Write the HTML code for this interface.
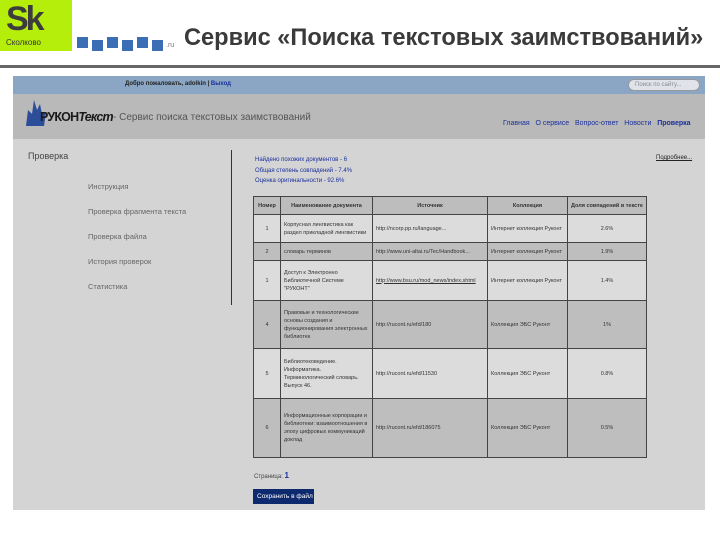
<!DOCTYPE html>
<html><head><meta charset="utf-8"><style>
*{margin:0;padding:0;box-sizing:border-box}
body{width:720px;height:540px;background:#fff;position:relative;overflow:hidden;font-family:"Liberation Sans",sans-serif}
.a{position:absolute}
.sq{position:absolute;width:11px;height:11px;background:#3a6fb5}
table{border-collapse:collapse;font-size:5.5px;color:#333;table-layout:fixed}
td,th{border:1px solid #444;padding:1px 3px;vertical-align:middle;overflow:hidden;line-height:8px}
th{background:#bdbdbd;height:18px;font-weight:bold;font-size:5.5px;white-space:nowrap}
tr.l td{background:#dcdcdc}
tr.d td{background:#bebebe}
.c{text-align:center}
.n{white-space:nowrap}
.side{font-size:7.5px;color:#666}
</style></head><body>
<div class="a" style="left:0;top:0;width:72px;height:51px;background:#b6ee0c"></div>
<div class="a" style="left:6px;top:2px;font-size:34px;font-weight:bold;color:#3c3c3c;letter-spacing:-3px;line-height:34px">Sk</div>
<div class="a" style="left:6px;top:38px;font-size:8px;color:#333">Сколково</div>
<div class="sq" style="left:77px;top:37px"></div><div class="sq" style="left:92px;top:40px"></div>
<div class="sq" style="left:107px;top:37px"></div><div class="sq" style="left:122px;top:40px"></div>
<div class="sq" style="left:137px;top:37px"></div><div class="sq" style="left:152px;top:40px"></div>
<div class="a" style="left:166px;top:42px;font-size:7px;color:#777">.ru</div>
<div class="a" style="left:184px;top:25px;font-size:23.6px;font-weight:bold;color:#3a3a3a;white-space:nowrap">Сервис «Поиска текстовых заимствований»</div>
<div class="a" style="left:0;top:65px;width:720px;height:3px;background:#666"></div>

<div class="a" style="left:13px;top:76px;width:692px;height:434px;background:#d4d4d4"></div>
<div class="a" style="left:13px;top:76px;width:692px;height:18px;background:#8aa6c4"></div>
<div class="a" style="left:125px;top:81px;font-size:6px;color:#222;font-weight:bold">Добро пожаловать, adolkin | <span style="color:#1a2f9c">Выход</span></div>
<div class="a" style="left:628px;top:79px;width:72px;height:12px;border-radius:6px;background:#e0e4ea;border:1px solid #999;font-size:6px;color:#888;padding:2px 6px;white-space:nowrap">Поиск по сайту...</div>
<div class="a" style="left:13px;top:94px;width:692px;height:45px;background:#b9b9b9"></div>
<svg class="a" style="left:24px;top:98px" width="22" height="28"><path d="M2 28 L4 12 L8 16 L10 2 L13 12 L16 6 L18 16 L22 14 L20 28Z" fill="#2b4d9a"/></svg>
<div class="a" style="left:40px;top:110px;font-size:12.5px;font-weight:bold;color:#1a1a1a;letter-spacing:-0.8px;white-space:nowrap">РУКОН<span style="font-style:italic">Текст</span></div>
<div class="a" style="left:113px;top:112px;font-size:10px;color:#555;white-space:nowrap">- Сервис поиска текстовых заимствований</div>
<div class="a" style="left:503px;top:120px;font-size:7px;color:#1a2f9c;white-space:nowrap">Главная&nbsp;&nbsp; О сервисе&nbsp;&nbsp; Вопрос-ответ&nbsp;&nbsp; Новости&nbsp;&nbsp; <b>Проверка</b></div>

<div class="a" style="left:28px;top:151px;font-size:9px;color:#444">Проверка</div>
<div class="a side" style="left:88px;top:182px">Инструкция</div>
<div class="a side" style="left:88px;top:207px">Проверка фрагмента текста</div>
<div class="a side" style="left:88px;top:232px">Проверка файла</div>
<div class="a side" style="left:88px;top:257px">История проверок</div>
<div class="a side" style="left:88px;top:282px">Статистика</div>
<div class="a" style="left:231px;top:150px;width:1px;height:155px;background:#333"></div>
<div class="a" style="left:255px;top:155px;font-size:6px;color:#1a2f9c;line-height:10.5px">Найдено похожих документов - 6<br>Общая степень совпадений - 7.4%<br>Оценка оригинальности - 92.6%</div>
<div class="a" style="left:656px;top:155px;font-size:6px;color:#222;text-decoration:underline">Подробнее...</div>

<table class="a" style="left:253px;top:196px;width:393px">
<colgroup><col style="width:27px"><col style="width:92px"><col style="width:115px"><col style="width:80px"><col style="width:79px"></colgroup>
<tr><th>Номер</th><th>Наименование документа</th><th>Источник</th><th>Коллекция</th><th>Доля совпадений в тексте</th></tr>
<tr class="l" style="height:28px"><td class="c">1</td><td>Корпусная лингвистика как раздел прикладной лингвистики</td><td class="n">http://ncorp.pp.ru/language...</td><td class="n">Интернет коллекция Руконт</td><td class="c">2.6%</td></tr>
<tr class="d" style="height:18px"><td class="c">2</td><td class="n">словарь терминов</td><td class="n">http://www.uni-altai.ru/Tec/Handbook...</td><td class="n">Интернет коллекция Руконт</td><td class="c">1.9%</td></tr>
<tr class="l" style="height:40px"><td class="c">1</td><td>Доступ к Электронно Библиотечной Системе "РУКОНТ"</td><td class="n" style="text-decoration:underline">http://www.bsu.ru/mod_news/index.shtml</td><td class="n">Интернет коллекция Руконт</td><td class="c">1.4%</td></tr>
<tr class="d" style="height:48px"><td class="c">4</td><td>Правовые и технологические основы создания и функционирования электронных библиотек</td><td class="n">http://rucont.ru/efd/180</td><td class="n">Коллекция ЭБС Руконт</td><td class="c">1%</td></tr>
<tr class="l" style="height:50px"><td class="c">5</td><td>Библиотековедение. Информатика. Терминологический словарь. Выпуск 46.</td><td class="n">http://rucont.ru/efd/11530</td><td class="n">Коллекция ЭБС Руконт</td><td class="c">0.8%</td></tr>
<tr class="d" style="height:59px"><td class="c">6</td><td>Информационные корпорации и библиотеки: взаимоотношения в эпоху цифровых коммуникаций доклад</td><td class="n">http://rucont.ru/efd/186075</td><td class="n">Коллекция ЭБС Руконт</td><td class="c">0.5%</td></tr>
</table>
<div class="a" style="left:254px;top:471px;font-size:6px;color:#444">Страница: <b style="font-size:8px;color:#1a2f9c">1</b></div>
<div class="a" style="left:253px;top:489px;width:61px;height:15px;background:#0e2a6e;color:#fff;font-size:6.5px;padding:4px 4px;white-space:nowrap">Сохранить в файл</div>
</body></html>
